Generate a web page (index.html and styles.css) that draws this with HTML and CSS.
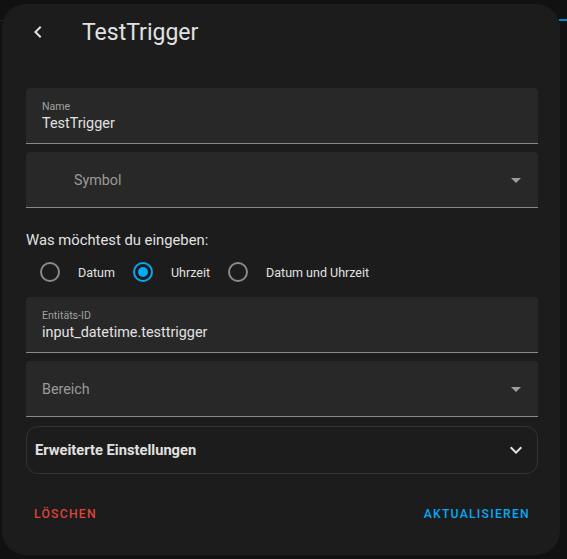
FILE: index.html
```html
<!DOCTYPE html>
<html lang="de">
<head>
    <meta charset="UTF-8">
    <meta name="viewport" content="width=device-width, initial-scale=1.0">
    <title>TestTrigger</title>
    <link rel="stylesheet" href="styles.css">
</head>
<body>
    <div class="dialog">
        <div class="header">
            <button class="icon-btn back">
                <svg viewBox="0 0 24 24" width="24" height="24"><path d="M15.41,16.58L10.83,12L15.41,7.41L14,6L8,12L14,18L15.41,16.58Z"/></svg>
            </button>
            <h1>TestTrigger</h1>
        </div>

        <div class="content">
            <div class="field">
                <span class="field-label">Name</span>
                <span class="field-value">TestTrigger</span>
            </div>

            <div class="field select with-icon">
                <span class="placeholder">Symbol</span>
                <svg class="arrow" viewBox="0 0 24 24" width="24" height="24"><path d="M7,10L12,15L17,10H7Z"/></svg>
            </div>

            <div class="question">Was möchtest du eingeben:</div>
            <div class="radios">
                <label class="radio"><span class="circle"></span>Datum</label>
                <label class="radio checked"><span class="circle"></span>Uhrzeit</label>
                <label class="radio"><span class="circle"></span>Datum und Uhrzeit</label>
            </div>

            <div class="field">
                <span class="field-label">Entitäts-ID</span>
                <span class="field-value">input_datetime.testtrigger</span>
            </div>

            <div class="field select">
                <span class="placeholder">Bereich</span>
                <svg class="arrow" viewBox="0 0 24 24" width="24" height="24"><path d="M7,10L12,15L17,10H7Z"/></svg>
            </div>

            <div class="expansion">
                <span>Erweiterte Einstellungen</span>
                <svg viewBox="0 0 24 24" width="24" height="24"><path d="M7.41,8.58L12,13.17L16.59,8.58L18,10L12,16L6,10L7.41,8.58Z"/></svg>
            </div>
        </div>

        <div class="actions">
            <button class="text-btn danger">Löschen</button>
            <button class="text-btn primary">Aktualisieren</button>
        </div>
    </div>
</body>
</html>
```

FILE: styles.css
```css
body {
    margin: 0;
    padding: 0;
    font-family: Roboto, 'Noto Sans', sans-serif;
    color: #e1e1e1;
    background:
        linear-gradient(#0288d1, #0288d1) no-repeat right 0 top 19px / 8px 2px,
        linear-gradient(#262626, #262626) no-repeat 0 20px / 100% 1px,
        #111111;
    height: 559px;
    overflow: hidden;
}
.dialog {
    margin: 4px 0 0 2px;
    width: 558px;
    height: 551px;
    box-sizing: border-box;
    background-color: #1c1c1c;
    border-radius: 24px;
    display: flex;
    flex-direction: column;
}
.header {
    height: 56px;
    display: flex;
    align-items: center;
    padding-left: 24px;
}
.icon-btn {
    width: 24px;
    height: 24px;
    padding: 0;
    border: none;
    background: none;
    fill: #e1e1e1;
    cursor: pointer;
}
.header h1 {
    margin: 0 0 0 32px;
    font-size: 23px;
    font-weight: 400;
    color: #e1e1e1;
}
.content {
    padding: 28px 22px 0 24px;
    display: flex;
    flex-direction: column;
}
.field {
    height: 55px;
    background-color: #282828;
    border-radius: 4px 4px 0 0;
    border-bottom: 1px solid #8a8a8a;
    padding: 0 16px;
    display: flex;
    flex-direction: column;
    justify-content: center;
    margin-bottom: 8px;
}
.field-label {
    font-size: 10.6px;
    color: #a0a0a0;
    line-height: 14px;
    margin-top: 2px;
}
.field-value {
    font-size: 14.4px;
    line-height: 20px;
    color: #e1e1e1;
}
.select {
    flex-direction: row;
    align-items: center;
    justify-content: space-between;
    padding-right: 10px;
}
.select.with-icon {
    padding-left: 48px;
}
.placeholder {
    font-size: 14.3px;
    color: #9a9a9a;
}
.arrow {
    fill: #9e9e9e;
}
.question {
    font-size: 14.8px;
    color: #e1e1e1;
    margin-top: 15px;
    line-height: 18px;
}
.radios {
    display: flex;
    align-items: center;
    height: 24px;
    margin: 11px 0 13px 14px;
}
.radio {
    display: flex;
    align-items: center;
    font-size: 12.5px;
    color: #e1e1e1;
    margin-right: 18px;
}
.circle {
    width: 16px;
    height: 16px;
    border: 2px solid #8a8a8a;
    border-radius: 50%;
    margin-right: 18px;
    position: relative;
}
.radio.checked .circle {
    border-color: #03a9f4;
}
.radio.checked .circle::after {
    content: "";
    position: absolute;
    left: 3px;
    top: 3px;
    width: 10px;
    height: 10px;
    border-radius: 50%;
    background-color: #03a9f4;
}
.expansion {
    margin-top: 1px;
    height: 46px;
    border: 1px solid #333333;
    border-radius: 12px;
    display: flex;
    align-items: center;
    justify-content: space-between;
    padding: 0 9px 0 8px;
    font-size: 14.7px;
    font-weight: 700;
    color: #e1e1e1;
}
.expansion svg {
    fill: #e1e1e1;
}
.actions {
    display: flex;
    justify-content: space-between;
    padding: 0 22px 0 24px;
    margin-top: 22px;
}
.text-btn {
    background: none;
    border: none;
    font-family: Roboto, sans-serif;
    font-size: 12.2px;
    font-weight: 500;
    letter-spacing: 1.25px;
    text-transform: uppercase;
    padding: 8px;
    height: 36px;
    cursor: pointer;
}
.danger {
    color: #db4437;
}
.primary {
    color: #03a9f4;
}
```
